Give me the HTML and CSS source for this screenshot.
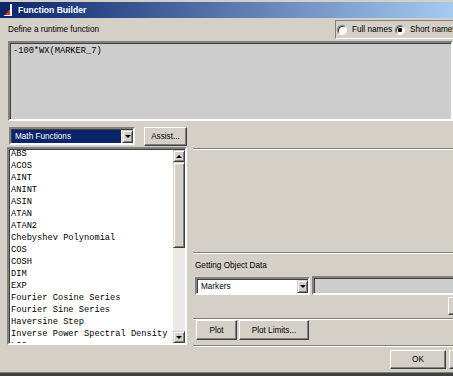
FILE: index.html
```html
<!DOCTYPE html>
<html lang="en">
<head>
    <meta charset="UTF-8">
    <title>Function Builder</title>
    <link rel="stylesheet" href="styles.css">
</head>
<body>
<div class="window">
    <div class="titlebar">
        <svg class="app-icon" width="10" height="12" viewBox="0 0 10 12">
            <rect x="6" y="0" width="2" height="12" fill="#ffffff"/>
            <polygon points="0,12 6,5 6,12" fill="#d8322a"/>
            <rect x="0" y="11" width="8" height="1" fill="#ffffff"/>
        </svg>
        <span class="title">Function Builder</span>
    </div>

    <div class="top">
        <span class="caption">Define a runtime function</span>
        <div class="names">
            <span class="radio"></span><span class="radio-label">Full names</span>
            <span class="radio checked"></span><span class="radio-label">Short names</span>
        </div>
    </div>

    <div class="editor">-100*WX(MARKER_7)</div>

    <div class="main">
        <div class="left">
            <div class="tools">
                <div class="combo math">
                    <span class="combo-text">Math Functions</span>
                    <span class="drop"><span class="arrow down"></span></span>
                </div>
                <button class="btn assist">Assist...</button>
            </div>
            <div class="list">
                <div class="items">
                    <div>ABS</div>
                    <div>ACOS</div>
                    <div>AINT</div>
                    <div>ANINT</div>
                    <div>ASIN</div>
                    <div>ATAN</div>
                    <div>ATAN2</div>
                    <div>Chebyshev Polynomial</div>
                    <div>COS</div>
                    <div>COSH</div>
                    <div>DIM</div>
                    <div>EXP</div>
                    <div>Fourier Cosine Series</div>
                    <div>Fourier Sine Series</div>
                    <div>Haversine Step</div>
                    <div>Inverse Power Spectral Density</div>
                    <div>LOG</div>
                </div>
                <div class="scrollbar">
                    <span class="sb-btn"><span class="arrow up"></span></span>
                    <span class="sb-thumb"></span>
                    <span class="sb-track"></span>
                    <span class="sb-btn"><span class="arrow down"></span></span>
                </div>
            </div>
        </div>

        <div class="right">
            <div class="groove first"></div>
            <div class="spacer"></div>
            <div class="groove"></div>
            <div class="section-label">Getting Object Data</div>
            <div class="object-row">
                <div class="combo markers">
                    <span class="combo-text">Markers</span>
                    <span class="drop"><span class="arrow down"></span></span>
                </div>
                <div class="field"></div>
            </div>
            <button class="btn cut"></button>
            <div class="groove g3"></div>
            <div class="plot-row">
                <button class="btn plot">Plot</button>
                <button class="btn limits">Plot Limits...</button>
            </div>
            <div class="groove g4"></div>
        </div>
    </div>

    <div class="footer">
        <button class="btn ok">OK</button>
        <button class="btn next"></button>
    </div>
</div>
</body>
</html>
```

FILE: styles.css
```css
body {
    margin: 0;
    font-family: "Liberation Sans", Arial, sans-serif;
    font-size: 8.2px;
    color: #000;
}
.window {
    width: 453px;
    height: 376px;
    background: #d4d0c8;
    overflow: hidden;
    display: flex;
    flex-direction: column;
    padding-top: 2px;
    box-sizing: border-box;
    box-shadow: inset 0 -3px #404040, inset 0 -4px #808080;
}
.titlebar {
    height: 16px;
    flex: none;
    display: flex;
    align-items: center;
    background: linear-gradient(to right, #0a246a, #a6caf0);
}
.app-icon {
    margin: 0 4px 0 4px;
}
.title {
    color: #fff;
    font-weight: bold;
    font-size: 8.6px;
}
.top {
    height: 23px;
    flex: none;
    display: flex;
    align-items: center;
}
.caption {
    padding-left: 8px;
}
.names {
    margin-left: auto;
    align-self: flex-start;
    margin-top: 2px;
    height: 19px;
    width: 130px;
    flex: none;
    box-sizing: border-box;
    border: 1px solid;
    border-color: #808080 #fff #fff #808080;
    display: flex;
    align-items: center;
    padding-left: 1px;
    margin-right: -12px;
}
.radio {
    width: 10px;
    height: 10px;
    box-sizing: border-box;
    border-radius: 50%;
    border: 1px solid;
    border-color: #808080 #fff #fff #808080;
    box-shadow: inset 1px 1px #404040;
    background: #fff;
    flex: none;
}
.radio.checked {
    background: radial-gradient(circle, #000 0, #000 2px, #fff 2.5px);
}
.radio-label {
    margin: 0 3px 0 5px;
    white-space: nowrap;
}
.editor {
    margin-left: 8px;
    height: 80px;
    flex: none;
    box-sizing: border-box;
    border: 2px solid;
    border-color: #808080 #fff #fff #808080;
    box-shadow: inset 1px 1px #404040;
    background: #cdcdcd;
    padding: 3px 3px;
    font-family: "Liberation Mono", "Courier New", monospace;
    font-size: 8.7px;
}
.main {
    height: 226px;
    flex: none;
    display: flex;
}
.left {
    width: 180px;
    margin-left: 7px;
    padding-top: 6px;
    display: flex;
    flex-direction: column;
}
.tools {
    display: flex;
    height: 19px;
}
.combo {
    height: 18px;
    box-sizing: border-box;
    border: 2px solid;
    border-color: #808080 #fff #fff #808080;
    box-shadow: inset 1px 1px #404040;
    background: #fff;
    display: flex;
    align-items: stretch;
}
.combo-text {
    flex: 1;
    display: flex;
    align-items: center;
    padding-left: 3px;
}
.combo.math {
    width: 126px;
    margin-left: 2px;
}
.combo.math .combo-text {
    background: #0a246a;
    color: #fff;
    margin: 1px 1px 0 1px;
}
.drop {
    width: 11px;
    flex: none;
    box-sizing: border-box;
    background: #d4d0c8;
    border: 1px solid;
    border-color: #d4d0c8 #404040 #404040 #d4d0c8;
    box-shadow: inset 1px 1px #fff, inset -1px -1px #808080;
    display: flex;
    align-items: center;
    justify-content: center;
    margin-top: 1px;
}
.arrow {
    width: 0;
    height: 0;
    border-left: 3px solid transparent;
    border-right: 3px solid transparent;
}
.arrow.down {
    border-top: 3px solid #000;
}
.arrow.up {
    border-bottom: 3px solid #000;
}
.btn {
    font-family: "Liberation Sans", Arial, sans-serif;
    font-size: 8.2px;
    color: #000;
    background: #d4d0c8;
    border: 1px solid;
    border-color: #fff #404040 #404040 #fff;
    box-shadow: inset -1px -1px #808080;
    padding: 0;
    flex: none;
}
.assist {
    width: 43px;
    height: 19px;
    margin-left: 9px;
}
.list {
    margin-top: 1px;
    height: 198px;
    box-sizing: border-box;
    border: 2px solid;
    border-color: #808080 #fff #fff #808080;
    box-shadow: inset 1px 1px #404040;
    background: #fff;
    display: flex;
}
.items {
    flex: 1;
    overflow: hidden;
    padding: 0 0 0 2px;
    font-family: "Liberation Mono", "Courier New", monospace;
    font-size: 8.7px;
    line-height: 12px;
    white-space: nowrap;
    margin-top: -1px;
}
.scrollbar {
    width: 12px;
    flex: none;
    display: flex;
    flex-direction: column;
    margin-top: 1px;
}
.sb-btn, .sb-thumb {
    box-sizing: border-box;
    background: #d4d0c8;
    border: 1px solid;
    border-color: #d4d0c8 #404040 #404040 #d4d0c8;
    box-shadow: inset 1px 1px #fff, inset -1px -1px #808080;
}
.sb-btn {
    height: 12px;
    display: flex;
    align-items: center;
    justify-content: center;
}
.sb-thumb {
    height: 86px;
}
.sb-track {
    flex: 1;
    background: #ebe9e5;
}
.right {
    flex: 1;
    margin-left: 6px;
    display: flex;
    flex-direction: column;
}
.groove {
    flex: none;
    border-top: 1px solid #808080;
    border-bottom: 1px solid #fff;
}
.groove.first {
    margin-top: 27px;
}
.spacer {
    height: 102px;
    flex: none;
}
.section-label {
    height: 22px;
    flex: none;
    display: flex;
    align-items: center;
    padding-left: 2px;
}
.object-row {
    display: flex;
    height: 19px;
    flex: none;
}
.combo.markers {
    width: 115px;
    margin: 1px 0 0 2px;
}
.combo.markers .combo-text {
    padding-left: 4px;
}
.field {
    flex: 1;
    margin-left: 2px;
    box-sizing: border-box;
    border: 2px solid;
    border-color: #808080 #fff #fff #808080;
    box-shadow: inset 1px 1px #404040;
    background: #cdcdcd;
}
.cut {
    width: 40px;
    height: 18px;
    margin: 2px 0 0 255px;
}
.g3 {
    margin-top: 3px;
}
.plot-row {
    display: flex;
    gap: 2px;
    padding-left: 3px;
    height: 20px;
    flex: none;
}
.plot {
    width: 41px;
}
.limits {
    width: 70px;
}
.g4 {
    margin-top: 5px;
}
.footer {
    height: 25px;
    flex: none;
    display: flex;
    padding: 3px 0 0 390px;
    box-sizing: border-box;
    gap: 3px;
}
.ok {
    width: 56px;
    height: 19px;
}
.next {
    width: 40px;
    height: 19px;
}
```
